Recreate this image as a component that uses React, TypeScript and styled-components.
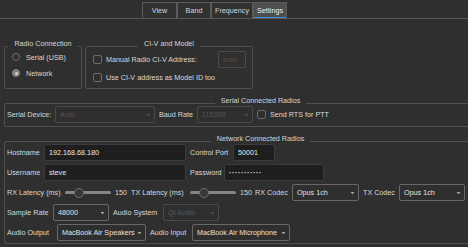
import styled, { createGlobalStyle } from 'styled-components';

const GlobalStyle = createGlobalStyle`
  html, body {
    margin: 0;
    padding: 0;
    background: #2f2f2f;
  }
`;

const Window = styled.div`
  width: 468px;
  height: 247px;
  overflow: hidden;
  background: #2f2f2f;
  font-family: 'Liberation Sans', Arial, sans-serif;
  font-size: 7.2px;
  color: #d9d9d9;
`;

const TabBar = styled.div`
  display: flex;
  box-sizing: border-box;
  height: 19px;
  padding: 2px 0 0 142px;
  border-bottom: 1px solid #575757;
`;

const Tab = styled.div<{ w: number; active?: boolean }>`
  box-sizing: border-box;
  width: ${(p) => p.w}px;
  height: 16px;
  display: flex;
  align-items: center;
  justify-content: center;
  border: 1px solid #5a5a5a;
  border-bottom: none;
  background: ${(p) => (p.active ? '#4e4e4e' : '#313131')};
  color: ${(p) => (p.active ? '#f0f0f0' : '#d6d6d6')};
  box-shadow: ${(p) => (p.active ? 'inset 0 -1px 0 #3d8fdc' : 'none')};
`;

const Page = styled.div`
  display: flex;
  flex-direction: column;
  gap: 14px;
  padding: 27px 0 0 4px;
`;

const TopRow = styled.div`
  display: flex;
  gap: 3px;
`;

const Group = styled.div<{ w: number; h: number }>`
  position: relative;
  box-sizing: border-box;
  flex-shrink: 0;
  width: ${(p) => p.w}px;
  height: ${(p) => p.h}px;
  border: 1px solid #4f4f4f;
  border-radius: 2px;
`;

const GroupTitle = styled.span`
  position: absolute;
  top: -8px;
  left: 50%;
  transform: translateX(-50%);
  padding: 0 6px;
  line-height: 9px;
  white-space: nowrap;
  background: #2f2f2f;
  color: #d6d6d6;
`;

const Stack = styled.div<{ pt: number; pl: number; gap: number }>`
  display: flex;
  flex-direction: column;
  gap: ${(p) => p.gap}px;
  padding: ${(p) => p.pt}px 6px 0 ${(p) => p.pl}px;
`;

const Row = styled.div<{ h: number; spread?: boolean }>`
  display: flex;
  align-items: center;
  gap: 4px;
  height: ${(p) => p.h}px;
  justify-content: ${(p) => (p.spread ? 'space-between' : 'flex-start')};
  white-space: nowrap;
`;

const Label = styled.span<{ w?: number; dim?: boolean }>`
  flex-shrink: 0;
  width: ${(p) => (p.w ? `${p.w}px` : 'auto')};
  white-space: nowrap;
  color: ${(p) => (p.dim ? '#5c5c5c' : '#d9d9d9')};
`;

const Option = styled.label`
  display: flex;
  align-items: center;
  gap: 6px;
`;

const RadioDot = styled.span<{ checked?: boolean }>`
  box-sizing: border-box;
  width: 8px;
  height: 8px;
  border-radius: 50%;
  border: 1px solid ${(p) => (p.checked ? '#8a8a8a' : '#6e6e6e')};
  background: ${(p) => (p.checked ? '#7c7c7c' : 'transparent')};
  display: flex;
  align-items: center;
  justify-content: center;

  &::after {
    content: '';
    width: 3px;
    height: 3px;
    border-radius: 50%;
    background: ${(p) => (p.checked ? '#d8d8d8' : 'transparent')};
  }
`;

const CheckItem = styled.label`
  display: flex;
  align-items: center;
  gap: 4px;
`;

const CheckBox = styled.span`
  box-sizing: border-box;
  width: 9px;
  height: 9px;
  border: 1px solid #6c6c6c;
  border-radius: 2px;
`;

const TextField = styled.div<{ w: number; disabled?: boolean }>`
  box-sizing: border-box;
  flex-shrink: 0;
  width: ${(p) => p.w}px;
  height: 17px;
  display: flex;
  align-items: center;
  padding-left: 4px;
  border: 1px solid ${(p) => (p.disabled ? '#4b4b4b' : '#3c3c3c')};
  border-radius: 2px;
  background: ${(p) => (p.disabled ? '#2f2f2f' : '#1e1e1e')};
  color: ${(p) => (p.disabled ? '#545454' : '#e8e8e8')};
`;

const Dots = styled.span`
  letter-spacing: 0.6px;
  font-weight: bold;
`;

const Combo = styled.div<{ w: number; disabled?: boolean }>`
  box-sizing: border-box;
  flex-shrink: 0;
  width: ${(p) => p.w}px;
  height: 17px;
  display: flex;
  align-items: center;
  justify-content: space-between;
  padding: 0 3px 0 4px;
  border: 1px solid ${(p) => (p.disabled ? '#4a4a4a' : '#686868')};
  border-radius: 2px;
  color: ${(p) => (p.disabled ? '#565656' : '#e2e2e2')};

  svg {
    flex-shrink: 0;
  }
`;

const Slider = styled.div<{ w: number; pos: number }>`
  position: relative;
  flex-shrink: 0;
  width: ${(p) => p.w}px;
  height: 10px;
  display: flex;
  align-items: center;

  &::before {
    content: '';
    width: 100%;
    height: 3px;
    border-radius: 2px;
    background: #858585;
  }

  &::after {
    content: '';
    position: absolute;
    left: ${(p) => p.pos}px;
    top: 0;
    box-sizing: border-box;
    width: 10px;
    height: 10px;
    border-radius: 50%;
    background: #363636;
    border: 1px solid #6f6f6f;
  }
`;

const Arrow = ({ dim }: { dim?: boolean }) => (
  <svg width="5" height="4" viewBox="0 0 5 4">
    <path d="M0.5 1 L4.5 1 L2.5 3.2 Z" fill={dim ? '#555' : '#a8a8a8'} />
  </svg>
);

const Select = ({ w, value, disabled }: { w: number; value: string; disabled?: boolean }) => (
  <Combo w={w} disabled={disabled}>
    <span>{value}</span>
    <Arrow dim={disabled} />
  </Combo>
);

const App = () => {
  return (
    <Window>
      <GlobalStyle />
      <TabBar>
        <Tab w={35}>View</Tab>
        <Tab w={34}>Band</Tab>
        <Tab w={42}>Frequency</Tab>
        <Tab w={34} active>
          Settings
        </Tab>
      </TabBar>

      <Page>
        <TopRow>
          <Group w={78} h={43}>
            <GroupTitle>Radio Connection</GroupTitle>
            <Stack pt={2} pl={7} gap={0}>
              <Row h={16}>
                <Option>
                  <RadioDot />
                  Serial (USB)
                </Option>
              </Row>
              <Row h={16}>
                <Option>
                  <RadioDot checked />
                  Network
                </Option>
              </Row>
            </Stack>
          </Group>

          <Group w={168} h={43}>
            <GroupTitle>CI-V and Model</GroupTitle>
            <Stack pt={4} pl={7} gap={1}>
              <Row h={17} spread>
                <CheckItem>
                  <CheckBox />
                  Manual Radio CI-V Address:
                </CheckItem>
                <TextField w={28} disabled>
                  auto
                </TextField>
              </Row>
              <Row h={16}>
                <CheckItem>
                  <CheckBox />
                  Use CI-V address as Model ID too
                </CheckItem>
              </Row>
            </Stack>
          </Group>
        </TopRow>

        <Group w={513} h={24}>
          <GroupTitle>Serial Connected Radios</GroupTitle>
          <Stack pt={2} pl={2} gap={0}>
            <Row h={17}>
              <Label w={44}>Serial Device:</Label>
              <Select w={100} value="Auto" disabled />
              <Label w={34}>Baud Rate</Label>
              <Select w={56} value="115200" disabled />
              <CheckItem>
                <CheckBox />
                Send RTS for PTT
              </CheckItem>
            </Row>
          </Stack>
        </Group>

        <Group w={513} h={103}>
          <GroupTitle>Network Connected Radios</GroupTitle>
          <Stack pt={2} pl={2} gap={3}>
            <Row h={17}>
              <Label w={33}>Hostname</Label>
              <TextField w={142}>192.168.68.180</TextField>
              <Label w={39}>Control Port</Label>
              <TextField w={42}>50001</TextField>
            </Row>
            <Row h={17}>
              <Label w={33}>Username</Label>
              <TextField w={142}>steve</TextField>
              <Label w={30}>Password</Label>
              <TextField w={100}>
                <Dots>···········</Dots>
              </TextField>
            </Row>
            <Row h={17}>
              <Label w={54}>RX Latency (ms)</Label>
              <Slider w={46} pos={9} />
              <Label w={12}>150</Label>
              <Label w={55}>TX Latency (ms)</Label>
              <Slider w={46} pos={9} />
              <Label w={11}>150</Label>
              <Label w={33}>RX Codec</Label>
              <Select w={67} value="Opus 1ch" />
              <Label w={32}>TX Codec</Label>
              <Select w={66} value="Opus 1ch" />
            </Row>
            <Row h={17}>
              <Label w={42}>Sample Rate</Label>
              <Select w={56} value="48000" />
              <Label w={46}>Audio System</Label>
              <Select w={56} value="Qt Audio" disabled />
            </Row>
            <Row h={17}>
              <Label w={46}>Audio Output</Label>
              <Select w={89} value="MacBook Air Speakers" />
              <Label w={38}>Audio Input</Label>
              <Select w={98} value="MacBook Air Microphone" />
            </Row>
          </Stack>
        </Group>
      </Page>
    </Window>
  );
};

export default App;
